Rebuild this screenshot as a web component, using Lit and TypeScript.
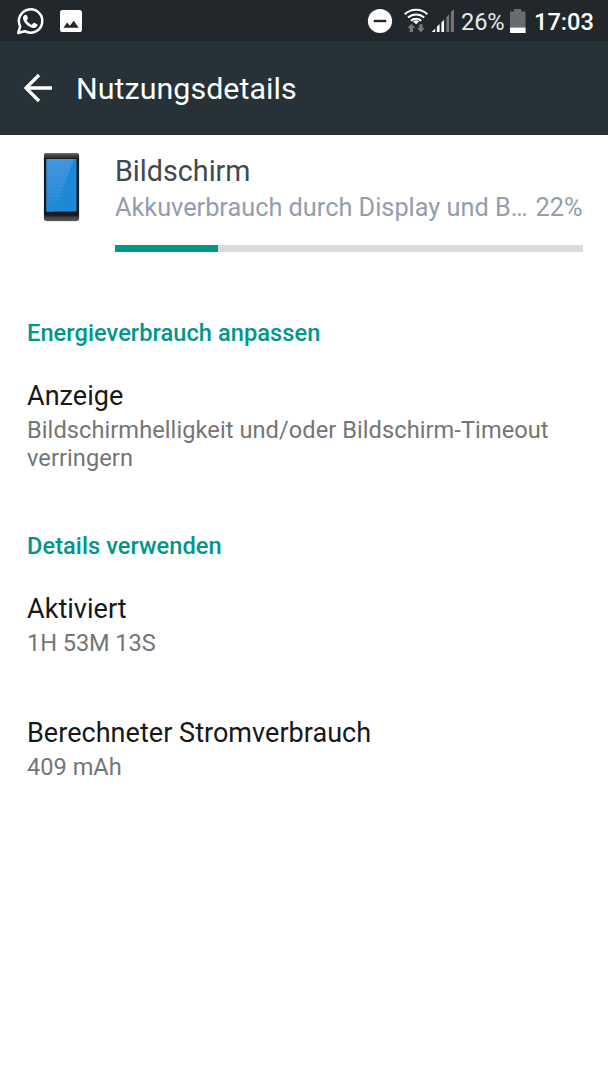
import { LitElement, html, css, svg } from "lit";
import { customElement } from "lit/decorators.js";

@customElement("status-bar")
class StatusBar extends LitElement {
  static styles = css`
    :host { display: flex; height: 41px; background: #21272b; color: #fff; }
    svg { display: block; flex: none; }
    .fill { flex: 1; }
    .pct { font-size: 23.6px; line-height: 41px; padding-top: 2px; width: 49px; color: #e9eaea; white-space: nowrap; letter-spacing: -0.1px; }
    .time { font-size: 23.6px; font-weight: 500; line-height: 41px; padding-top: 2px; width: 74px; white-space: nowrap; }
  `;
  render() {
    return html`
      <svg width="100" height="41" viewBox="0.8 0 100 41">
        <path d="M19 33 L21 26.4 A11.7 11.7 0 1 1 25.6 31.2 Z" fill="none" stroke="#fff" stroke-width="2.5" stroke-linejoin="round"/>
        <path d="M25.6 15.1c.6-.6 1.6-.5 2 .2l1.1 2.5c.2.6-.1 1-.5 1.5l-.8.9c1.2 2.2 2.9 3.7 5.2 4.7l1.3-1.6c.4-.5.9-.6 1.4-.4l2.5 1.2c.6.4.6.7.4 1.5-.5 1.8-2.4 2.6-4.1 2.3-5-.8-9.6-5.2-10.3-9.4-.2-1.4.8-2.8 1.8-3.4z" fill="#fff"/>
        <path fill="#fff" fill-rule="evenodd" d="M63.4 10h16.8a2.6 2.6 0 0 1 2.6 2.6v16.800a2.600 2.600 0 0 1-2.600 2.600H63.400a2.600 2.600 0 0 1-2.600-2.600V12.600a2.600 2.600 0 0 1 2.600-2.600zM64.300 27.800H79.600L74.500 20.800 70.700 25.700 67.900 22.500z"/>
      </svg>
      <div class="fill"></div>
      <svg width="97" height="41" viewBox="364 0 97 41">
        <circle cx="380" cy="21" r="12.100" fill="#fff"/>
        <path d="M373.700 21h12.600" stroke="#22282b" stroke-width="2.400"/>
        <g fill="none" stroke="#fff" stroke-width="2.100">
          <path d="M404.800 14.200a16.500 16.500 0 0 1 22.600 0"/>
          <path d="M408 17.600a12 12 0 0 1 16.200 0"/>
          <path d="M411 20.700a7.500 7.500 0 0 1 10.200 0"/>
        </g>
        <path d="M413 21.600a4.600 4.600 0 0 1 6.200 0L416.100 24.200z" fill="#fff"/>
        <path fill="#73787a" d="M411.300 23.800l3.900 4.300h-2.200v3.900h-3.400v-3.900h-2.200zM420.800 32.400l-3.700-4.300h2.100v-3.800h3.400v3.800h2.100z"/>
        <path fill="#fff" d="M431.800 32l3.400-3.400V32zM436.900 26.800l2.700-2.700V32h-2.700zM441.400 22.600l2.700-2.800V32h-2.700z"/>
        <path fill="#73787a" d="M446.400 17.200l2.800-2.900V32h-2.800zM450.900 12.100l3-3.200V32h-3z"/>
      </svg>
      <div class="pct">26%</div>
      <svg width="24" height="41" viewBox="510 0 24 41">
        <path fill="#686c6e" d="M510 11.400h3.900V9h7.300v2.400h4.300V27.500H510z"/>
        <path fill="#fff" d="M510 27.500h15.600V33H510z"/>
      </svg>
      <div class="time">17:03</div>`;
  }
}

const phone = svg`
  <defs>
    <linearGradient id="m" x1="0" y1="0" x2="0" y2="1"><stop offset="0" stop-color="#777"/><stop offset=".35" stop-color="#494b4c"/><stop offset="1" stop-color="#292b2d"/></linearGradient>
    <linearGradient id="n" x1="0" y1="0" x2="0" y2="1"><stop offset="0" stop-color="#222"/><stop offset=".7" stop-color="#555"/><stop offset="1" stop-color="#333"/></linearGradient>
    <linearGradient id="g" x1="0" y1="0" x2="0" y2="1"><stop offset="0" stop-color="#4596dc"/><stop offset="1" stop-color="#1f87d6"/></linearGradient>
    <pattern id="d" width="3" height="3" patternUnits="userSpaceOnUse"><rect width="1" height="1" fill="#66a9e4" opacity=".3"/></pattern>
  </defs>
  <rect x="43.500" y="153.500" width="36" height="68" rx="3" fill="#bbb" opacity=".6"/>
  <rect x="44" y="153" width="35" height="67.500" rx="2.500" fill="#191c1f"/>
  <path d="M44 158v-2.500q0-2.500 2.500-2.500h30q2.500 0 2.500 2.500V158z" fill="url(#m)"/>
  <path d="M44 215.500h35v2.500q0 2.500-2.500 2.500H46.500q-2.500 0-2.500-2.500z" fill="url(#n)"/>
  <rect x="46.500" y="159" width="30" height="52.500" fill="#1d88d7"/>
  <path d="M46.500 159H74L54 211.500H46.500z" fill="url(#g)"/>
  <rect x="47" y="171" width="18" height="26" fill="url(#d)"/>`;

@customElement("app-root")
class AppRoot extends LitElement {
  static styles = css`
    :host { display: block; height: 1080px; overflow: hidden; background: #fff; font-family: Roboto, "Noto Sans", sans-serif; }
    .bar { display: flex; height: 94px; background: #263238; color: #fff; }
    .bar svg { display: block; flex: none; }
    .title { font-size: 30.400px; line-height: 95px; letter-spacing: 0.05px; white-space: nowrap; }
    .app { display: flex; height: 156px; }
    .app svg { display: block; flex: none; }
    .info { width: 468px; padding-top: 19px; }
    .name { font-size: 28.700px; line-height: 34px; color: #42494d; }
    .desc { display: flex; justify-content: space-between; font-size: 25.300px; line-height: 34px; margin-top: 3px; padding-right: 0.500px; color: #949dac; white-space: nowrap; }
    .track { height: 7px; margin-top: 19.500px; background: #dadcdb; }
    .used { height: 7px; background: #009688; }
    .body { padding: 0 27px; }
    .section { font-size: 23.600px; font-weight: 500; line-height: 28px; height: 48px; padding-top: 28px; color: #009688; letter-spacing: 0.06px; }
    .item { padding-top: 12px; }
    .head { font-size: 27px; line-height: 34px; color: #181818; white-space: nowrap; letter-spacing: 0.04px; }
    .sub { font-size: 23.600px; line-height: 28px; color: #757575; padding-top: 3px; }
    .item.tall { height: 125px; }
    .item.tall .sub { letter-spacing: 0.070px; white-space: nowrap; }
    .item.mid { height: 112px; }
    .item.mid .sub { letter-spacing: -0.08px; }
  `;
  render() {
    return html`
      <status-bar></status-bar>
      <div class="bar">
        <svg width="76" height="94" viewBox="0 41 76 94"><path d="M52 88H26.500M39 75L26 88L39 101" fill="none" stroke="#fff" stroke-width="3.300"/></svg>
        <div class="title">Nutzungsdetails</div>
      </div>
      <div class="app">
        <svg width="115" height="100" viewBox="0 135 115 100">${phone}</svg>
        <div class="info">
          <div class="name">Bildschirm</div>
          <div class="desc"><span>Akkuverbrauch durch Display und B…</span><span>22%</span></div>
          <div class="track"><div class="used" style="width:22%"></div></div>
        </div>
      </div>
      <div class="body">
        <div class="section">Energieverbrauch anpassen</div>
        <div class="item tall"><div class="head">Anzeige</div><div class="sub">Bildschirmhelligkeit und/oder Bildschirm-Timeout<br>verringern</div></div>
        <div class="section">Details verwenden</div>
        <div class="item mid"><div class="head">Aktiviert</div><div class="sub">1H 53M 13S</div></div>
        <div class="item"><div class="head">Berechneter Stromverbrauch</div><div class="sub">409 mAh</div></div>
      </div>`;
  }
}
